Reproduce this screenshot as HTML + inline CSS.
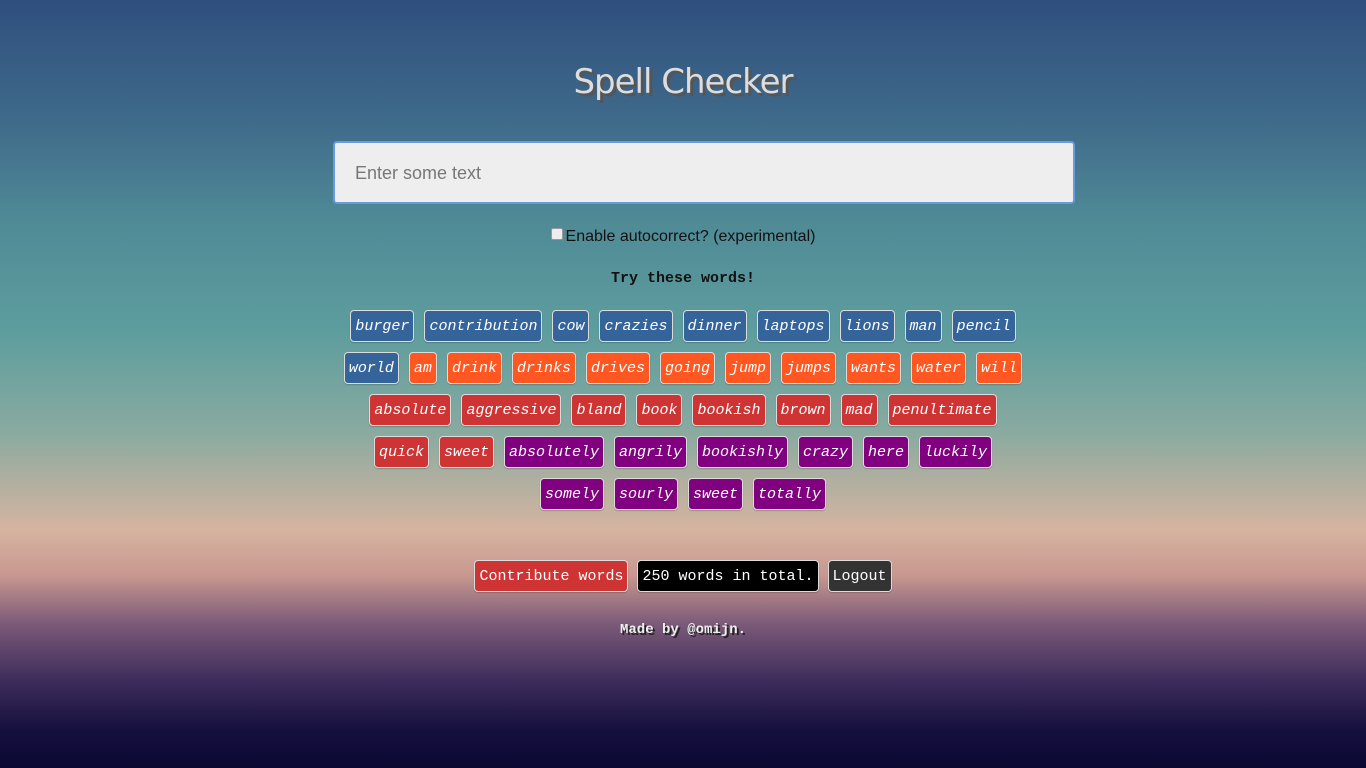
<!DOCTYPE html>
<html><head><meta charset="utf-8"><style>
*{box-sizing:border-box;margin:0;padding:0}
body{width:1366px;height:768px;overflow:hidden;position:relative;font-family:"Liberation Sans",sans-serif;
background:linear-gradient(180deg,#2f4f7e 0px,#3f6a8a 120px,#4f8a96 220px,#5d9d9e 330px,#88aaa0 430px,#d6b4a0 530px,#c89890 575px,#7a5878 625px,#3e2d5c 680px,#15103e 730px,#0c0834 768px);}
.title{position:absolute;top:62px;left:0;width:1366px;text-align:center;font-family:"Comic Sans MS","DejaVu Sans",sans-serif;font-size:34px;color:#ddd;text-shadow:3px 3px 0 #555;letter-spacing:-1px}
.inp{position:absolute;left:333px;top:141px;width:742px;height:63px;background:#eee;border:2px solid #6a9be0;border-radius:4px;font-size:18px;color:#777;padding:20px 0 0 20px}
.chk{position:absolute;top:228px;left:0;width:1366px;text-align:center;font-size:16px;color:#111}
.chk span{display:inline-block;width:12px;height:12px;background:#eee;border:1px solid #999;border-radius:2px;margin-right:3px;vertical-align:1px}
.try{position:absolute;top:270px;left:0;width:1366px;text-align:center;font-family:"Liberation Mono",monospace;font-weight:bold;font-size:15px;color:#111}
.row{position:absolute;left:0;width:1366px;display:flex;justify-content:center;gap:10px}
.t{height:32px;line-height:31px;padding:0 4px;border-radius:4px;border:1px solid #ddd;color:#fff;font-family:"Liberation Mono",monospace;font-style:italic;font-size:15px;box-shadow:0 1px 1px rgba(0,0,0,.2)}
.b{background:#35649a}.o{background:#ff5722}.r{background:#cf3434}.p{background:#800080}
.btns{top:560px;gap:9px}
.btns .t{font-style:normal;font-size:15px;padding:0 4px}
.made{position:absolute;top:622px;left:0;width:1366px;text-align:center;font-family:"Liberation Mono",monospace;font-weight:bold;font-size:14px;color:#eee;text-shadow:2px 2px 0 #222}
</style></head><body>
<div class="title">Spell Checker</div>
<div class="inp">Enter some text</div>
<div class="chk"><span></span>Enable autocorrect? (experimental)</div>
<div class="try">Try these words!</div>
<div class="row" style="top:310px"><div class="t b">burger</div><div class="t b">contribution</div><div class="t b">cow</div><div class="t b">crazies</div><div class="t b">dinner</div><div class="t b">laptops</div><div class="t b">lions</div><div class="t b">man</div><div class="t b">pencil</div></div>
<div class="row" style="top:352px"><div class="t b">world</div><div class="t o">am</div><div class="t o">drink</div><div class="t o">drinks</div><div class="t o">drives</div><div class="t o">going</div><div class="t o">jump</div><div class="t o">jumps</div><div class="t o">wants</div><div class="t o">water</div><div class="t o">will</div></div>
<div class="row" style="top:394px"><div class="t r">absolute</div><div class="t r">aggressive</div><div class="t r">bland</div><div class="t r">book</div><div class="t r">bookish</div><div class="t r">brown</div><div class="t r">mad</div><div class="t r">penultimate</div></div>
<div class="row" style="top:436px"><div class="t r">quick</div><div class="t r">sweet</div><div class="t p">absolutely</div><div class="t p">angrily</div><div class="t p">bookishly</div><div class="t p">crazy</div><div class="t p">here</div><div class="t p">luckily</div></div>
<div class="row" style="top:478px"><div class="t p">somely</div><div class="t p">sourly</div><div class="t p">sweet</div><div class="t p">totally</div></div>
<div class="row btns"><div class="t r">Contribute words</div><div class="t" style="background:#000">250 words in total.</div><div class="t" style="background:#333">Logout</div></div>
<div class="made">Made by @omijn.</div>
</body></html>
